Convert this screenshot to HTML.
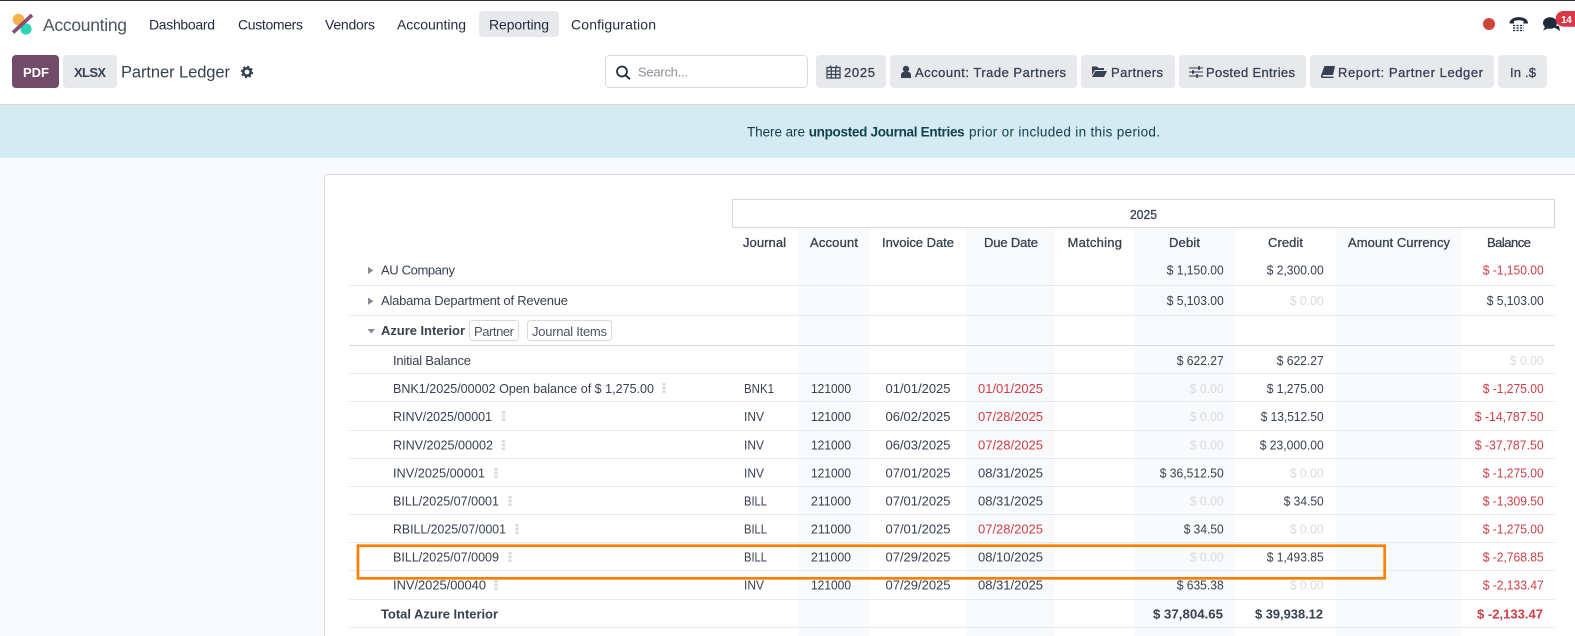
<!DOCTYPE html>
<html><head><meta charset="utf-8"><title>Partner Ledger</title>
<style>
html,body{margin:0;padding:0;background:#fff;width:1575px;height:636px;overflow:hidden}
svg{display:block}
text{font-family:"Liberation Sans",sans-serif;font-size:13px;fill:#374151}
.n{font-size:14px;fill:#1f2a3d}
.m{stroke:#374151;stroke-width:.3}
.b{font-weight:bold}
.r{text-anchor:end}
.e{fill:#cf3d46}
.g{fill:#d8dadd}
.k{stroke:#d8dadd;stroke-width:3.4;stroke-dasharray:2.6 1.1;fill:none}
.l{stroke:#e7e9ed;stroke-width:1}
.i{fill:#374151}
</style></head><body>
<svg width="1575" height="636" viewBox="0 0 1575 636" xmlns="http://www.w3.org/2000/svg">
<rect width="1575" height="636" fill="#f9fafb"/>
<rect width="1575" height="104" fill="#fff"/>
<rect width="1575" height="1" fill="#2b2b2b"/>
<rect y="104" width="1575" height="1" fill="#d8dadd"/>
<rect y="105" width="1575" height="53" fill="#d4ebf1"/>

<!-- logo -->
<circle cx="18.5" cy="19.5" r="5.8" fill="#f9b24a"/>
<circle cx="26" cy="29" r="5.6" fill="#2fd3b9"/>
<path d="M32 15L13 32.5" stroke="#8b4c78" stroke-width="3.6"/>
<text x="43" y="31" textLength="84" style="font-size:17.5px;fill:#4b5563">Accounting</text>
<text class="n" x="149" y="29.5" textLength="66">Dashboard</text>
<text class="n" x="238" y="29.5" textLength="65">Customers</text>
<text class="n" x="325" y="29.5" textLength="50">Vendors</text>
<text class="n" x="397" y="29.5" textLength="69">Accounting</text>
<rect x="479" y="11" width="80" height="26" rx="4" fill="#e7e9ed"/>
<text class="n" x="489" y="29.5" textLength="60">Reporting</text>
<text class="n" x="571" y="29.5" textLength="85">Configuration</text>

<!-- systray -->
<circle cx="1489" cy="24" r="6" fill="#ce4436"/>
<path d="M1509.5 23.5c0-8.5 18.500-8.5 18.500 0h-4.500v-2.500c-3-1-6.500-1-9.500 0v2.500z" fill="#1f2a3d"/>
<path d="M1513 25.500h11M1513 28h11M1513 30.500h11" stroke="#1f2a3d" stroke-width="1.200" stroke-dasharray="2.200 1.300"/>
<ellipse cx="1550" cy="23" rx="7" ry="5.800" fill="#1f2a3d"/>
<path d="M1545 27l-2 3.500 5-2zM1552 26l8 5-1-5z" fill="#1f2a3d"/>
<path d="M1575 11h-11.500a7.800 7.800 0 0 0 0 15.700H1575z" fill="#dc3545"/>
<text class="b" x="1561" y="23" textLength="11" style="font-size:10.500px;fill:#fff">14</text>

<!-- control panel -->
<rect x="12" y="55" width="47" height="33" rx="4" fill="#714b67"/>
<text class="b" x="23" y="77" textLength="26" style="fill:#fff">PDF</text>
<rect x="63" y="55" width="54" height="33" rx="4" fill="#e7e9ed"/>
<text class="b" x="74" y="77" textLength="32">XLSX</text>
<text x="121" y="77.500" textLength="109" style="font-size:16.500px">Partner Ledger</text>
<circle cx="247" cy="72" r="3.700" fill="none" stroke="#374151" stroke-width="2.600"/>
<circle cx="247" cy="72" r="5.400" fill="none" stroke="#374151" stroke-width="1.600" stroke-dasharray="2.100 2.140"/>

<rect x="605.500" y="55.500" width="202" height="32" rx="4" fill="#fff" stroke="#d8dadd"/>
<circle cx="622" cy="71.500" r="5" fill="none" stroke="#1f2a3d" stroke-width="1.700"/>
<path d="M625.700 75.500l4.300 3.700" stroke="#1f2a3d" stroke-width="1.900"/>
<text x="638" y="76.700" textLength="50" style="fill:#8a8f98">Search...</text>

<rect x="816" y="55" width="70" height="33" rx="4" fill="#e7e9ed"/>
<path d="M827 67.500h13v10.500h-13zM827 71h13M827 74.500h13M831.300 67.500v10.500M835.700 67.500v10.500" fill="none" stroke="#374151" stroke-width="1.200"/>
<path d="M830.500 65.500v2.500M836.500 65.500v2.500" stroke="#374151" stroke-width="1.600"/>
<text class="m" x="844" y="77" textLength="31">2025</text>

<rect x="890" y="55" width="187" height="33" rx="4" fill="#e7e9ed"/>
<circle class="i" cx="906" cy="69" r="3.200"/>
<path class="i" d="M901 78v-3c0-2.500 2-3.500 5-3.500s5 1 5 3.500v3z"/>
<text class="m" x="915" y="77" textLength="151">Account: Trade Partners</text>

<rect x="1081" y="55" width="94" height="33" rx="4" fill="#e7e9ed"/>
<path class="i" d="M1092 66.500h5l1.500 1.500h5.500v2h-9l-3 5z"/>
<path class="i" d="M1095.500 71h11.500l-3 6h-12z"/>
<text class="m" x="1111" y="77" textLength="52">Partners</text>

<rect x="1179" y="55" width="127" height="33" rx="4" fill="#e7e9ed"/>
<path d="M1189 68h14M1189 72h14M1189 76h14" stroke="#374151" stroke-width="1.100"/>
<path class="i" d="M1198 66.200h2v3.600h-2zM1192 70.200h2v3.600h-2zM1196 74.200h2v3.600h-2z"/>
<text class="m" x="1206" y="77" textLength="89">Posted Entries</text>

<rect x="1310" y="55" width="184" height="33" rx="4" fill="#e7e9ed"/>
<path class="i" d="M1324.500 66h10.500l-2 9h-9.500c-1.200 0-1.200 1.600 0 1.600h10v1.400h-11c-1.500 0-1.800-1.300-1.500-2.500z"/>
<text class="m" x="1338" y="77" textLength="145">Report: Partner Ledger</text>

<rect x="1498" y="55" width="49" height="33" rx="4" fill="#e7e9ed"/>
<text class="m" x="1510" y="77" textLength="26">In .$</text>

<!-- alert -->
<text x="747" y="136.700" textLength="58" style="font-size:13.500px;fill:#12414f">There are</text>
<text class="b" x="808.700" y="136.700" textLength="156" style="font-size:13.500px;fill:#12414f">unposted Journal Entries</text>
<text x="969" y="136.700" textLength="191" style="font-size:13.500px;fill:#12414f">prior or included in this period.</text>

<!-- card: open at the bottom and right, it continues past the frame -->
<path d="M324.500 636V178.500a4 4 0 0 1 4-4H1575V636z" fill="#fff"/>
<path d="M324.500 636V178.500a4 4 0 0 1 4-4H1575" fill="none" stroke="#d8dadd"/>
<rect x="798" y="228" width="72" height="408" fill="#f9fafb"/>
<rect x="966" y="228" width="89" height="408" fill="#f9fafb"/>
<rect x="1134" y="228" width="101" height="408" fill="#f9fafb"/>
<rect x="1336" y="228" width="126" height="408" fill="#f9fafb"/>
<rect x="732.500" y="199.500" width="822" height="28" fill="#fff" stroke="#d8dadd" stroke-width="1.200"/>
<text class="m" x="1130" y="219" textLength="27" lengthAdjust="spacingAndGlyphs">2025</text>

<g class="l">
<path class="l" d="M349 285.500H1555M349 315.500H1555M349 373.500H1555M349 401.500H1555M349 430.500H1555M349 458.500H1555M349 486.500H1555M349 514.500H1555M349 542.500H1555M349 570.500H1555M349 599.500H1555M349 627.500H1555"/>
<path d="M349 345.500H1555" stroke="#d8dadd"/>
</g>

<!-- column headers -->
<text class="m" x="743" y="247" textLength="43">Journal</text>
<text class="m" x="810" y="247" textLength="48">Account</text>
<text class="m" x="882" y="247" textLength="72">Invoice Date</text>
<text class="m" x="984" y="247" textLength="54">Due Date</text>
<text class="m" x="1067.500" y="247" textLength="54.500">Matching</text>
<text class="m" x="1169" y="247" textLength="31">Debit</text>
<text class="m" x="1268" y="247" textLength="35">Credit</text>
<text class="m" x="1348" y="247" textLength="102">Amount Currency</text>
<text class="m" x="1487" y="247" textLength="44">Balance</text>

<!-- partner rows -->
<path d="M368 266.700l5.300 3.700-5.300 3.700z" fill="#868b94"/>
<text x="381" y="274.500" textLength="74">AU Company</text>
<text class="r" x="1223.700" y="274.500" textLength="57" lengthAdjust="spacingAndGlyphs">$ 1,150.00</text>
<text class="r" x="1323.700" y="274.500" textLength="57" lengthAdjust="spacingAndGlyphs">$ 2,300.00</text>
<text class="r e" x="1543.700" y="274.500" textLength="61" lengthAdjust="spacingAndGlyphs">$ -1,150.00</text>

<path d="M368 297.500l5.300 3.700-5.300 3.700z" fill="#868b94"/>
<text x="381" y="305" textLength="187">Alabama Department of Revenue</text>
<text class="r" x="1223.700" y="305" textLength="57" lengthAdjust="spacingAndGlyphs">$ 5,103.00</text>
<text class="r g" x="1323.700" y="305" textLength="34" lengthAdjust="spacingAndGlyphs">$ 0.00</text>
<text class="r" x="1543.700" y="305" textLength="57" lengthAdjust="spacingAndGlyphs">$ 5,103.00</text>

<path d="M367.500 329h7.500l-3.750 4.500z" fill="#868b94"/>
<text class="b" x="381" y="335" textLength="84">Azure Interior</text>
<rect x="469.500" y="320.500" width="49" height="20" rx="3" fill="#fff" stroke="#d8dadd"/>
<text x="474" y="336" textLength="40" style="fill:#4b5563">Partner</text>
<rect x="527.500" y="320.500" width="84" height="20" rx="3" fill="#fff" stroke="#d8dadd"/>
<text x="532" y="336" textLength="75" style="fill:#4b5563">Journal Items</text>

<!-- detail rows -->
<text x="393" y="365" textLength="78">Initial Balance</text>
<text class="r" x="1223.700" y="365" textLength="47" lengthAdjust="spacingAndGlyphs">$ 622.27</text>
<text class="r" x="1323.700" y="365" textLength="47" lengthAdjust="spacingAndGlyphs">$ 622.27</text>
<text class="r g" x="1543.700" y="365" textLength="34" lengthAdjust="spacingAndGlyphs">$ 0.00</text>

<text x="393" y="393" textLength="261" lengthAdjust="spacingAndGlyphs">BNK1/2025/00002 Open balance of $ 1,275.00</text>
<path class="k" d="M664 383V393"/>
<text x="744" y="393" textLength="30" lengthAdjust="spacingAndGlyphs">BNK1</text>
<text x="811" y="393" textLength="40" lengthAdjust="spacingAndGlyphs">121000</text>
<text x="885.500" y="393" textLength="65">01/01/2025</text>
<text class="e" x="978" y="393" textLength="65">01/01/2025</text>
<text class="r g" x="1223.700" y="393" textLength="34" lengthAdjust="spacingAndGlyphs">$ 0.00</text>
<text class="r" x="1323.700" y="393" textLength="57" lengthAdjust="spacingAndGlyphs">$ 1,275.00</text>
<text class="r e" x="1543.700" y="393" textLength="61" lengthAdjust="spacingAndGlyphs">$ -1,275.00</text>

<text x="393" y="421" textLength="99" lengthAdjust="spacingAndGlyphs">RINV/2025/00001</text>
<path class="k" d="M503.500 411V421"/>
<text x="744" y="421" textLength="20" lengthAdjust="spacingAndGlyphs">INV</text>
<text x="811" y="421" textLength="40" lengthAdjust="spacingAndGlyphs">121000</text>
<text x="885.500" y="421" textLength="65">06/02/2025</text>
<text class="e" x="978" y="421" textLength="65">07/28/2025</text>
<text class="r g" x="1223.700" y="421" textLength="34" lengthAdjust="spacingAndGlyphs">$ 0.00</text>
<text class="r" x="1323.700" y="421" textLength="63" lengthAdjust="spacingAndGlyphs">$ 13,512.50</text>
<text class="r e" x="1543.700" y="421" textLength="69" lengthAdjust="spacingAndGlyphs">$ -14,787.50</text>

<text x="393" y="449.500" textLength="100" lengthAdjust="spacingAndGlyphs">RINV/2025/00002</text>
<path class="k" d="M503.500 440V450"/>
<text x="744" y="449.500" textLength="20" lengthAdjust="spacingAndGlyphs">INV</text>
<text x="811" y="449.500" textLength="40" lengthAdjust="spacingAndGlyphs">121000</text>
<text x="885.500" y="449.500" textLength="65">06/03/2025</text>
<text class="e" x="978" y="449.500" textLength="65">07/28/2025</text>
<text class="r g" x="1223.700" y="449.500" textLength="34" lengthAdjust="spacingAndGlyphs">$ 0.00</text>
<text class="r" x="1323.700" y="449.500" textLength="64" lengthAdjust="spacingAndGlyphs">$ 23,000.00</text>
<text class="r e" x="1543.700" y="449.500" textLength="69" lengthAdjust="spacingAndGlyphs">$ -37,787.50</text>

<text x="393" y="477.500" textLength="92" lengthAdjust="spacingAndGlyphs">INV/2025/00001</text>
<path class="k" d="M496 468V478"/>
<text x="744" y="477.500" textLength="20" lengthAdjust="spacingAndGlyphs">INV</text>
<text x="811" y="477.500" textLength="40" lengthAdjust="spacingAndGlyphs">121000</text>
<text x="885.500" y="477.500" textLength="65">07/01/2025</text>
<text x="978" y="477.500" textLength="65">08/31/2025</text>
<text class="r" x="1223.700" y="477.500" textLength="64" lengthAdjust="spacingAndGlyphs">$ 36,512.50</text>
<text class="r g" x="1323.700" y="477.500" textLength="34" lengthAdjust="spacingAndGlyphs">$ 0.00</text>
<text class="r e" x="1543.700" y="477.500" textLength="61" lengthAdjust="spacingAndGlyphs">$ -1,275.00</text>

<text x="393" y="505.500" textLength="106" lengthAdjust="spacingAndGlyphs">BILL/2025/07/0001</text>
<path class="k" d="M510 496V506"/>
<text x="744" y="505.500" textLength="23" lengthAdjust="spacingAndGlyphs">BILL</text>
<text x="811" y="505.500" textLength="40" lengthAdjust="spacingAndGlyphs">211000</text>
<text x="885.500" y="505.500" textLength="65">07/01/2025</text>
<text x="978" y="505.500" textLength="65">08/31/2025</text>
<text class="r g" x="1223.700" y="505.500" textLength="34" lengthAdjust="spacingAndGlyphs">$ 0.00</text>
<text class="r" x="1323.700" y="505.500" textLength="40" lengthAdjust="spacingAndGlyphs">$ 34.50</text>
<text class="r e" x="1543.700" y="505.500" textLength="61" lengthAdjust="spacingAndGlyphs">$ -1,309.50</text>

<text x="393" y="533.500" textLength="113" lengthAdjust="spacingAndGlyphs">RBILL/2025/07/0001</text>
<path class="k" d="M517 524V534"/>
<text x="744" y="533.500" textLength="23" lengthAdjust="spacingAndGlyphs">BILL</text>
<text x="811" y="533.500" textLength="40" lengthAdjust="spacingAndGlyphs">211000</text>
<text x="885.500" y="533.500" textLength="65">07/01/2025</text>
<text class="e" x="978" y="533.500" textLength="65">07/28/2025</text>
<text class="r" x="1223.700" y="533.500" textLength="40" lengthAdjust="spacingAndGlyphs">$ 34.50</text>
<text class="r g" x="1323.700" y="533.500" textLength="34" lengthAdjust="spacingAndGlyphs">$ 0.00</text>
<text class="r e" x="1543.700" y="533.500" textLength="61" lengthAdjust="spacingAndGlyphs">$ -1,275.00</text>

<text x="393" y="561.500" textLength="106" lengthAdjust="spacingAndGlyphs">BILL/2025/07/0009</text>
<path class="k" d="M510 552V562"/>
<text x="744" y="561.500" textLength="23" lengthAdjust="spacingAndGlyphs">BILL</text>
<text x="811" y="561.500" textLength="40" lengthAdjust="spacingAndGlyphs">211000</text>
<text x="885.500" y="561.500" textLength="65">07/29/2025</text>
<text x="978" y="561.500" textLength="65">08/10/2025</text>
<text class="r g" x="1223.700" y="561.500" textLength="34" lengthAdjust="spacingAndGlyphs">$ 0.00</text>
<text class="r" x="1323.700" y="561.500" textLength="57" lengthAdjust="spacingAndGlyphs">$ 1,493.85</text>
<text class="r e" x="1543.700" y="561.500" textLength="61" lengthAdjust="spacingAndGlyphs">$ -2,768.85</text>

<text x="393" y="589.500" textLength="93" lengthAdjust="spacingAndGlyphs">INV/2025/00040</text>
<path class="k" d="M496 580V590"/>
<text x="744" y="589.500" textLength="20" lengthAdjust="spacingAndGlyphs">INV</text>
<text x="811" y="589.500" textLength="40" lengthAdjust="spacingAndGlyphs">121000</text>
<text x="885.500" y="589.500" textLength="65">07/29/2025</text>
<text x="978" y="589.500" textLength="65">08/31/2025</text>
<text class="r" x="1223.700" y="589.500" textLength="47" lengthAdjust="spacingAndGlyphs">$ 635.38</text>
<text class="r g" x="1323.700" y="589.500" textLength="34" lengthAdjust="spacingAndGlyphs">$ 0.00</text>
<text class="r e" x="1543.700" y="589.500" textLength="61" lengthAdjust="spacingAndGlyphs">$ -2,133.47</text>

<text class="b" x="381" y="618.500" textLength="117">Total Azure Interior</text>
<text class="r b" x="1223" y="618.500" textLength="70" lengthAdjust="spacingAndGlyphs">$ 37,804.65</text>
<text class="r b" x="1323" y="618.500" textLength="68" lengthAdjust="spacingAndGlyphs">$ 39,938.12</text>
<text class="r b e" x="1543" y="618.500" textLength="66" lengthAdjust="spacingAndGlyphs">$ -2,133.47</text>

<!-- highlight -->
<rect x="358" y="545.700" width="1026.700" height="32.600" fill="none" stroke="#ff8000" stroke-width="2.700"/>
</svg>
</body></html>
